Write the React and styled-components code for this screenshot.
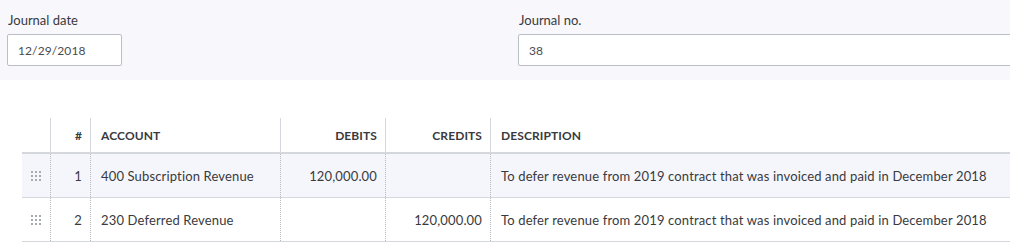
import React from "react";
import styled, { createGlobalStyle } from "styled-components";

const GlobalStyle = createGlobalStyle`
  body {
    margin: 0;
    background: #fff;
    font-family: Lato, "Open Sans", Arial, sans-serif;
    color: #393a3d;
    overflow: hidden;
  }
`;

const Page = styled.div`
  width: 1010px;
  overflow: hidden;
`;

const HeaderBand = styled.div`
  background: #f7f7fc;
  height: 80px;
  box-sizing: border-box;
  padding: 12px 0 0 7px;
  display: flex;
`;

const Field = styled.div`
  display: flex;
  flex-direction: column;
  flex: 0 0 ${(p) => p.$span}px;
`;

const Label = styled.label`
  font-size: 13px;
  line-height: 16px;
  padding-left: 1px;
  margin-bottom: 6px;
  color: #393a3d;
`;

const Input = styled.input`
  box-sizing: border-box;
  height: 32px;
  width: ${(p) => p.$width}px;
  border: 1px solid #babec5;
  border-radius: 2px;
  background: #fff;
  padding: 0 10px;
  font-family: inherit;
  font-size: 12px;
  letter-spacing: 0.1px;
  color: #4a4b4f;
  outline: none;
`;

const Table = styled.div`
  margin: 38px 0 0 22px;
  width: 1100px;
`;

const cols = "28px 40px 190px 105px 105px 1fr";

const HeadRow = styled.div`
  display: grid;
  grid-template-columns: ${cols};
  height: 36px;
  box-sizing: border-box;
  border-bottom: 2px solid #d4d7dc;
`;

const HeadCell = styled.div`
  display: flex;
  align-items: center;
  justify-content: ${(p) => (p.$right ? "flex-end" : "flex-start")};
  padding: ${(p) => (p.$right ? "0 8px 0 0" : "0 0 0 10px")};
  border-left: ${(p) => (p.$first ? "none" : "1px solid #d4d7dc")};
  font-size: 12px;
  font-weight: 700;
  text-transform: uppercase;
  color: #393a3d;
  letter-spacing: 0.1px;
`;

const Row = styled.div`
  display: grid;
  grid-template-columns: ${cols};
  height: 44px;
  box-sizing: border-box;
  border-bottom: 1px solid #d4d7dc;
  background: ${(p) => (p.$active ? "#f5f6fb" : "#fff")};
`;

const Cell = styled.div`
  display: flex;
  align-items: center;
  justify-content: ${(p) => (p.$right ? "flex-end" : "flex-start")};
  padding: ${(p) => (p.$right ? "0 8px 0 0" : "0 0 0 10px")};
  border-left: ${(p) => (p.$first ? "none" : "1px dotted #b5b9c0")};
  font-size: 13px;
  letter-spacing: 0.15px;
  color: #393a3d;
  white-space: nowrap;
`;

const HandleCell = styled.div`
  display: flex;
  align-items: center;
  justify-content: center;
`;

const Dots = styled.div`
  display: grid;
  grid-template-columns: repeat(3, 2px);
  grid-auto-rows: 2px;
  gap: 2px;
  margin-top: 1px;
`;

const Dot = styled.span`
  background: #a7aab0;
`;

const Handle = () => (
  <HandleCell>
    <Dots>
      {Array.from({ length: 9 }).map((_, i) => (
        <Dot key={i} />
      ))}
    </Dots>
  </HandleCell>
);

const lines = [
  {
    n: 1,
    account: "400 Subscription Revenue",
    debit: "120,000.00",
    credit: "",
    desc: "To defer revenue from 2019 contract that was invoiced and paid in December 2018",
  },
  {
    n: 2,
    account: "230 Deferred Revenue",
    debit: "",
    credit: "120,000.00",
    desc: "To defer revenue from 2019 contract that was invoiced and paid in December 2018",
  },
];

export default function App() {
  return (
    <Page>
      <GlobalStyle />
      <HeaderBand>
        <Field $span={511}>
          <Label>Journal date</Label>
          <Input $width={115} defaultValue="12/29/2018" />
        </Field>
        <Field $span={520}>
          <Label>Journal no.</Label>
          <Input $width={520} defaultValue="38" />
        </Field>
      </HeaderBand>
      <Table>
        <HeadRow>
          <HeadCell $first />
          <HeadCell $right>#</HeadCell>
          <HeadCell>Account</HeadCell>
          <HeadCell $right>Debits</HeadCell>
          <HeadCell $right>Credits</HeadCell>
          <HeadCell>Description</HeadCell>
        </HeadRow>
        {lines.map((l) => (
          <Row key={l.n} $active={l.n === 1}>
            <Handle />
            <Cell $right>{l.n}</Cell>
            <Cell>{l.account}</Cell>
            <Cell $right>{l.debit}</Cell>
            <Cell $right>{l.credit}</Cell>
            <Cell>{l.desc}</Cell>
          </Row>
        ))}
      </Table>
    </Page>
  );
}
